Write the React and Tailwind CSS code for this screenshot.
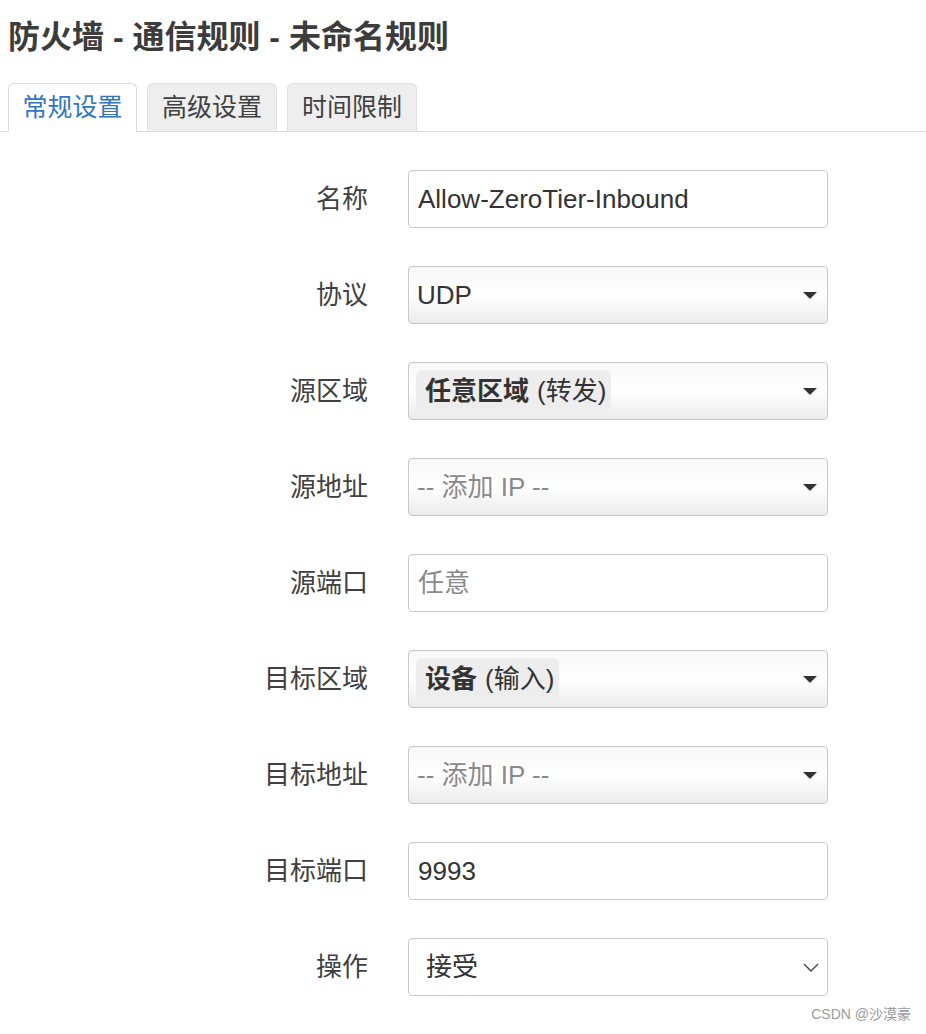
import React from 'react';

const font = { fontFamily: '"Liberation Sans", "Noto Sans CJK SC", sans-serif' };

function Caret() {
  return (
    <svg width="14" height="7" viewBox="0 0 14 7" className="shrink-0">
      <path d="M0 0 H14 L7 7 Z" fill="#333" />
    </svg>
  );
}

function Chevron() {
  return (
    <svg width="16" height="9" viewBox="0 0 16 9" className="shrink-0">
      <path d="M1 1 L8 8 L15 1" fill="none" stroke="#444" strokeWidth="1.4" />
    </svg>
  );
}

function TextBox({ value, placeholder }) {
  return (
    <div className="w-[420px] h-[58px] border border-[#c9c9c9] rounded-[4px] bg-white flex items-center pl-[9px]">
      {value ? (
        <span className="text-[#333]">{value}</span>
      ) : (
        <span className="text-[#8a8a8a]">{placeholder}</span>
      )}
    </div>
  );
}

function DropBox({ children }) {
  return (
    <div className="w-[420px] h-[58px] border border-[#c9c9c9] rounded-[4px] bg-gradient-to-b from-[#f7f7f7] via-white to-[#ebebeb] flex items-center justify-between pl-[7px] pr-[10px]">
      <div className="flex items-center">{children}</div>
      <Caret />
    </div>
  );
}

function Zone({ name, hint }) {
  return (
    <span className="bg-[#ededed] rounded-[6px] h-[42px] pl-[9px] pr-[5px] flex items-center text-[#333]">
      <b className="font-bold">{name}</b>
      <span className="ml-[8px]">{hint}</span>
    </span>
  );
}

function Row({ label, children }) {
  return (
    <div className="flex items-center h-[58px]">
      <div className="w-[368px] text-right text-[#404040]">{label}</div>
      <div className="ml-[40px]">{children}</div>
    </div>
  );
}

export default function App() {
  const tabs = ['常规设置', '高级设置', '时间限制'];
  return (
    <div className="w-[926px] h-[1034px] bg-white relative overflow-hidden" style={font}>
      <h2 className="pl-[8px] pt-[18px] text-[32px] leading-[38px] font-bold text-[#3c3c3c]">
        防火墙 - 通信规则 - 未命名规则
      </h2>

      <div className="mt-[27px] flex gap-[10px] pl-[8px] border-b border-[#dcdcdc]">
        {tabs.map((t, i) => (
          <div
            key={t}
            className={
              i === 0
                ? 'w-[129px] h-[49px] -mb-px border border-b-0 border-[#dcdcdc] rounded-t-[6px] bg-white flex items-center justify-center text-[25px] text-[#3276c3]'
                : 'w-[130px] h-[48px] border border-b-0 border-[#e0e0e0] rounded-t-[6px] bg-[#eeeeee] flex items-center justify-center text-[25px] text-[#404040]'
            }
          >
            {t}
          </div>
        ))}
      </div>

      <div className="mt-[38px] flex flex-col gap-[38px] text-[26px]">
        <Row label="名称">
          <TextBox value="Allow-ZeroTier-Inbound" />
        </Row>
        <Row label="协议">
          <DropBox>
            <span className="text-[#333] ml-[1px]">UDP</span>
          </DropBox>
        </Row>
        <Row label="源区域">
          <DropBox>
            <Zone name="任意区域" hint="(转发)" />
          </DropBox>
        </Row>
        <Row label="源地址">
          <DropBox>
            <span className="text-[#8a8a8a] ml-[1px]">-- 添加 IP --</span>
          </DropBox>
        </Row>
        <Row label="源端口">
          <TextBox placeholder="任意" />
        </Row>
        <Row label="目标区域">
          <DropBox>
            <Zone name="设备" hint="(输入)" />
          </DropBox>
        </Row>
        <Row label="目标地址">
          <DropBox>
            <span className="text-[#8a8a8a] ml-[1px]">-- 添加 IP --</span>
          </DropBox>
        </Row>
        <Row label="目标端口">
          <TextBox value="9993" />
        </Row>
        <Row label="操作">
          <div className="w-[420px] h-[58px] border border-[#c9c9c9] rounded-[4px] bg-white flex items-center justify-between pl-[17px] pr-[8px]">
            <span className="text-[#333]">接受</span>
            <Chevron />
          </div>
        </Row>
      </div>

      <div className="absolute right-[15px] bottom-[9px] text-[14px] text-[#9a9a9a]">CSDN @沙漠豪</div>
    </div>
  );
}
